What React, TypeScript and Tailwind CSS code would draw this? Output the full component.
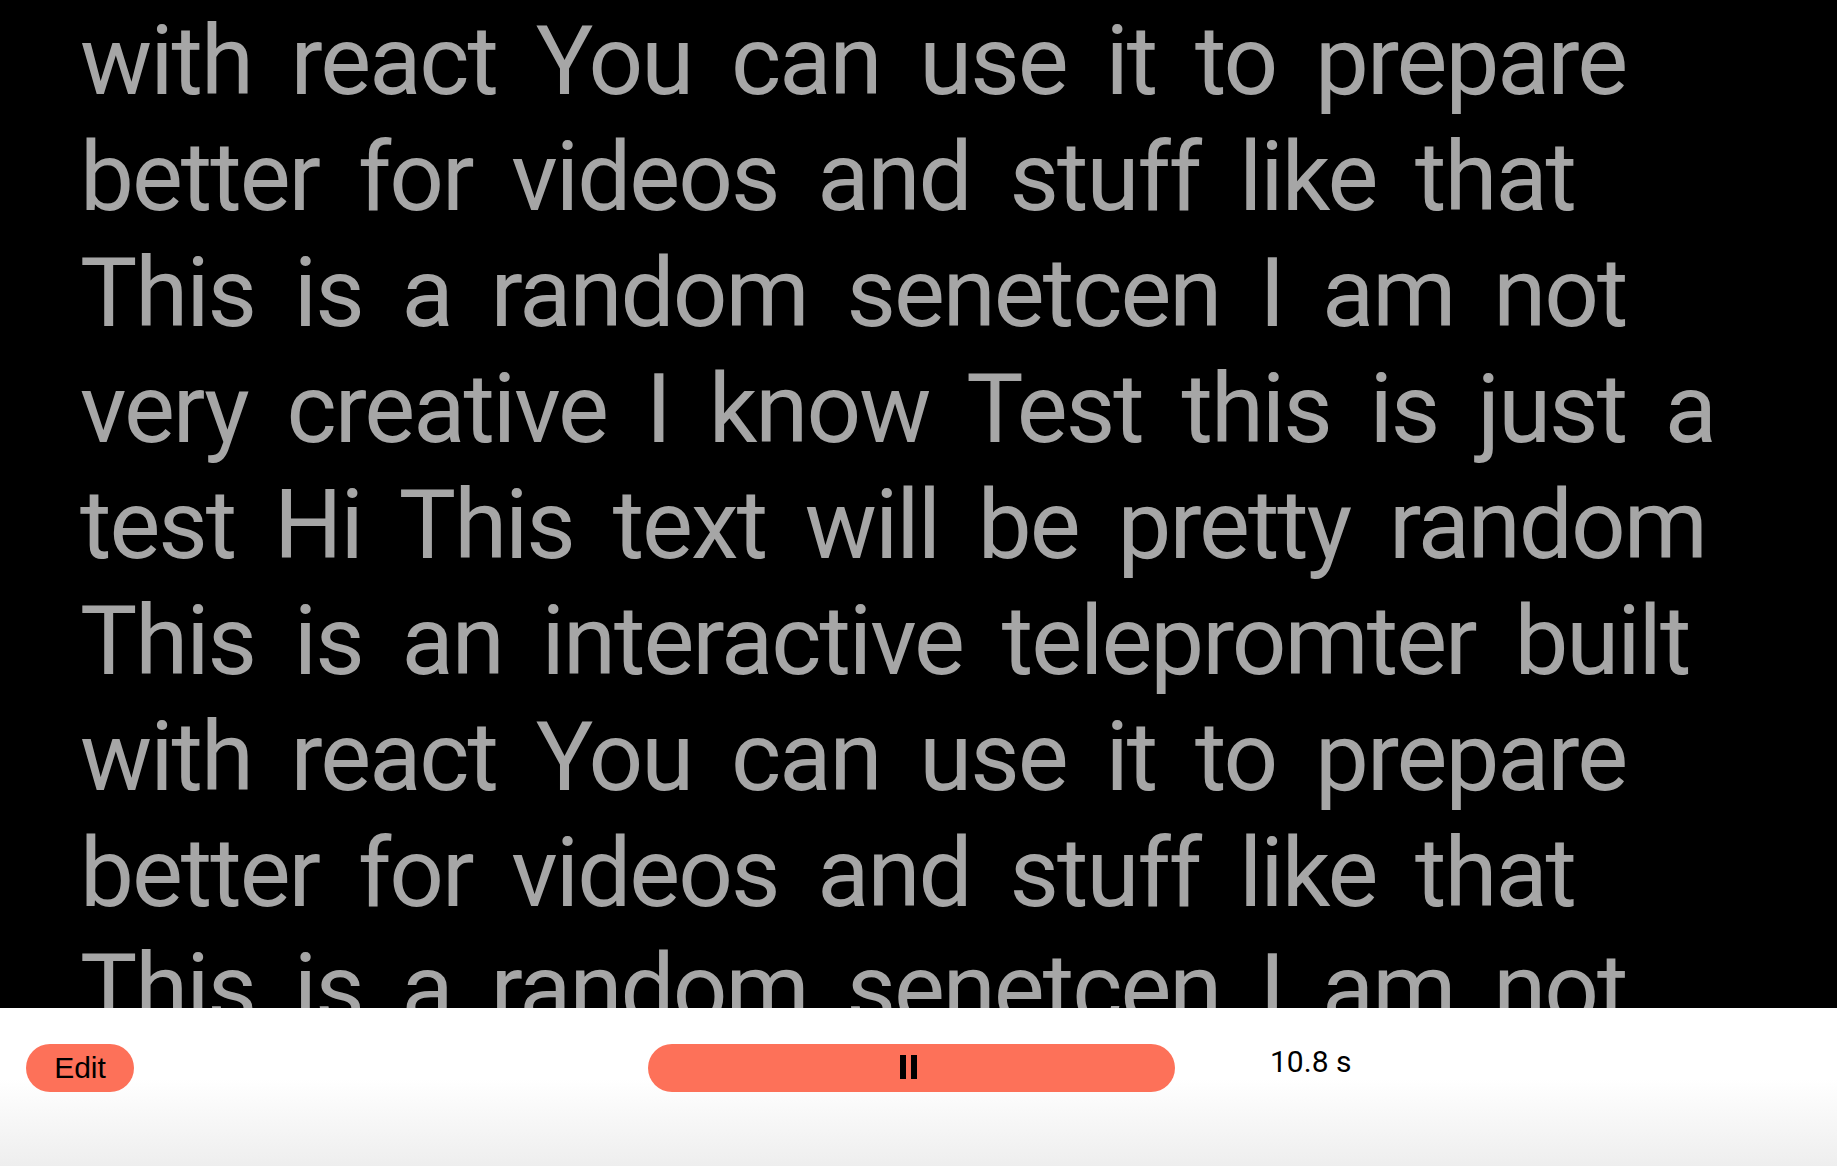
import React, { useState } from 'react';

const lines = [
    'with react You can use it to prepare',
    'better for videos and stuff like that',
    'This is a random senetcen I am not',
    'very creative I know Test this is just a',
    'test Hi This text will be pretty random',
    'This is an interactive telepromter built',
    'with react You can use it to prepare',
    'better for videos and stuff like that',
    'This is a random senetcen I am not',
    'very creative I know Test this is just a',
];

const App = () => {
    const [playing, setPlaying] = useState(true);

    return (
        <div className="h-[1166px] w-full flex flex-col bg-black overflow-hidden">
            {/* script area */}
            <div className="h-[1008px] shrink-0 overflow-hidden bg-black pl-[80px] pr-[80px] pt-[3px]">
                <div className="font-['Roboto',sans-serif] text-[96px] leading-[116px] text-[#a6a6a6] [word-spacing:17px] tracking-[-2px]">
                    {lines.map((line, i) => (
                        <div key={i} className="whitespace-nowrap">
                            {line}
                        </div>
                    ))}
                </div>
            </div>

            {/* controls */}
            <div className="flex-1 flex items-start pt-[36px] pl-[26px] bg-linear-to-b from-white from-45% to-[#eeeeee]">
                <button className="h-[48px] w-[108px] rounded-full bg-[#fd7159] text-black text-[30px] font-['Liberation_Sans',Arial,sans-serif] leading-none">
                    Edit
                </button>
                <button
                    onClick={() => setPlaying(!playing)}
                    className="ml-[514px] h-[48px] w-[527px] rounded-full bg-[#fd7159] flex items-center justify-center"
                >
                    <span className="flex gap-[5px] -ml-[7px] -mt-[3px]">
                        <span className="block w-[6px] h-[24px] bg-black" />
                        <span className="block w-[6px] h-[24px] bg-black" />
                    </span>
                </button>
                <span className="ml-[95px] text-[30px] leading-[36px] text-black font-['Roboto',sans-serif]">
                    10.8 s
                </span>
            </div>
        </div>
    );
};

export default App;
